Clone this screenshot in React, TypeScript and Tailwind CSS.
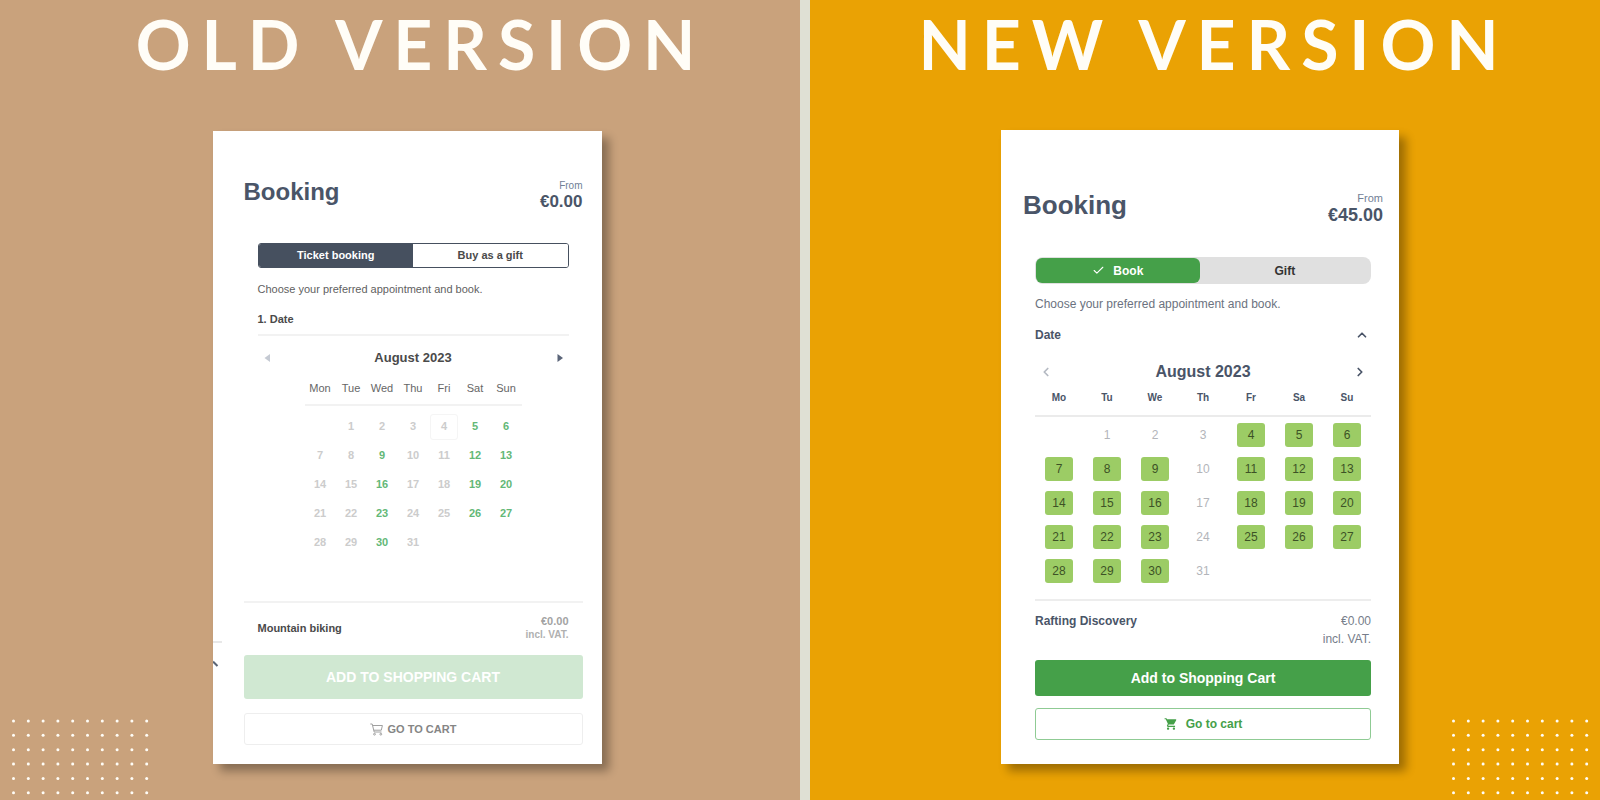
import { useState } from "react";
import { Check, ChevronLeft, ChevronRight, ChevronUp } from "lucide-react";
import { MdShoppingCart } from "react-icons/md";

const weeks: (number | null)[][] = [
  [null, 1, 2, 3, 4, 5, 6],
  [7, 8, 9, 10, 11, 12, 13],
  [14, 15, 16, 17, 18, 19, 20],
  [21, 22, 23, 24, 25, 26, 27],
  [28, 29, 30, 31, null, null, null],
];

const oldDays = ["Mon", "Tue", "Wed", "Thu", "Fri", "Sat", "Sun"];
const newDays = ["Mo", "Tu", "We", "Th", "Fr", "Sa", "Su"];

const oldAvailable = [5, 6, 9, 12, 13, 16, 19, 20, 23, 26, 27, 30];
const newUnavailable = [1, 2, 3, 10, 17, 24, 31];

const Title = ({ children }: { children: string }) => (
  <h1 className="pl-7 text-center font-['Lato',sans-serif] text-[68px] leading-[88px] font-bold tracking-[0.16em] whitespace-nowrap text-[#fffdf7]">
    {children}
  </h1>
);

const Dots = ({ className }: { className: string }) => (
  <svg width="160" height="84" viewBox="0 0 160 84" className={className} aria-hidden="true">
    {[0, 1, 2, 3, 4, 5].map((row) =>
      [0, 1, 2, 3, 4, 5, 6, 7, 8, 9].map((col) => (
        <circle
          key={`${row}-${col}`}
          cx={13.5 + col * 14.8}
          cy={5 + row * 14.35}
          r="1.5"
          fill="#fffdf7"
        />
      ))
    )}
  </svg>
);

const CartOutline = () => (
  <svg width="13" height="13" viewBox="0 0 13 13" fill="none" stroke="#a0a0a0" aria-hidden="true">
    <path d="M0.3 1h1.9l2 8h7.3M2.6 2.5h9.8l-1.1 4.7H3.8" />
    <circle cx="4.5" cy="11.2" r="0.9" />
    <circle cx="10.8" cy="11.2" r="0.9" />
  </svg>
);

const OldBooking = () => {
  const [tab, setTab] = useState("ticket");

  const tabClass = (name: string) =>
    tab === name ? "flex-1 bg-[#46505f] text-white" : "flex-1 bg-white text-[#4a4a4a]";

  return (
    <section className="relative mx-auto mt-[43px] w-[389px] bg-white pt-[47px] pr-[19px] pb-[19px] pl-[31px] shadow-[7px_7px_9px_rgba(0,0,0,0.33)]">
      {/* edge of the page behind the widget */}
      <svg width="10" height="30" viewBox="0 0 10 30" className="absolute bottom-[95px] left-0" fill="none" aria-hidden="true">
        <path d="M0 3h9" stroke="#e8e8e8" strokeWidth="2" />
        <path d="M0 22.5l4.5 4.5" stroke="#5b6575" strokeWidth="2" />
      </svg>

      <header className="flex items-start justify-between text-[#4a5568]">
        <h2 className="text-[24px] leading-7 font-bold">Booking</h2>
        <div className="text-right">
          <div className="text-[10px] leading-4 text-[#718096]">From</div>
          <div className="text-[17px] leading-4 font-bold">€0.00</div>
        </div>
      </header>

      <div className="mx-[14px] mt-[33px]">
        <div className="flex h-[25px] overflow-hidden rounded-[3px] border border-[#46505f] text-[11px] font-bold">
          <button type="button" onClick={() => setTab("ticket")} className={tabClass("ticket")}>
            Ticket booking
          </button>
          <button type="button" onClick={() => setTab("gift")} className={tabClass("gift")}>
            Buy as a gift
          </button>
        </div>
        <p className="mt-[13px] text-[11px] leading-4 text-[#5f5f5f]">
          Choose your preferred appointment and book.
        </p>
        <h3 className="mt-[14px] border-b-2 border-[#f2f2f2] pb-[7px] text-[11px] leading-4 font-bold text-[#4a4a4a]">
          1. Date
        </h3>

        <div className="mt-[14px] flex h-4 items-center justify-between px-[6px]">
          <button type="button" aria-label="Previous month">
            <svg width="6" height="8" viewBox="0 0 6 8" aria-hidden="true">
              <path d="M6 0v8L0.5 4z" fill="#c5cad3" />
            </svg>
          </button>
          <span className="text-[13px] leading-4 font-bold text-[#4a4a4a]">August 2023</span>
          <button type="button" aria-label="Next month">
            <svg width="6" height="8" viewBox="0 0 6 8" aria-hidden="true">
              <path d="M0.5 0v8L6 4z" fill="#5b6579" />
            </svg>
          </button>
        </div>

        <table className="mx-auto mt-[7px] w-[217px] table-fixed border-collapse text-center text-[11px]">
          <thead>
            <tr className="border-b-2 border-[#f2f2f2]">
              {oldDays.map((day) => (
                <th key={day} scope="col" className="h-[32px] p-0 font-normal text-[#666666]">
                  {day}
                </th>
              ))}
            </tr>
          </thead>
          <tbody className="before:block before:h-[6px]">
            {weeks.map((week, i) => (
              <tr key={i}>
                {week.map((day, j) => (
                  <td key={j} className="h-[29px] p-0">
                    {day && (
                      <button
                        type="button"
                        disabled={!oldAvailable.includes(day)}
                        className={
                          oldAvailable.includes(day)
                            ? "font-bold text-[#63b877]"
                            : day === 4
                              ? "h-[26px] w-[28px] rounded-[3px] border border-[#f5f5f5] font-bold text-[#cccccc]"
                              : "font-bold text-[#cccccc]"
                        }
                      >
                        {day}
                      </button>
                    )}
                  </td>
                ))}
              </tr>
            ))}
          </tbody>
        </table>
      </div>

      <footer className="mt-[44px] border-t-2 border-[#f2f2f2]">
        <div className="flex items-center justify-between px-[14px] pt-[11px] pb-[13px]">
          <span className="text-[11px] font-bold text-[#4a4a4a]">Mountain biking</span>
          <div className="text-right leading-[14px] font-bold text-[#b0b0b0]">
            <div className="text-[11px] text-[#a3a3a3]">€0.00</div>
            <div className="text-[10px]">incl. VAT.</div>
          </div>
        </div>
        <button type="button" className="block h-11 w-full rounded-[3px] bg-[#d0e8d2] text-[14px] font-bold text-white">
          ADD TO SHOPPING CART
        </button>
        <button
          type="button"
          className="mt-[14px] flex h-8 w-full items-center justify-center gap-[5px] rounded-[3px] border border-[#eeeeee] text-[11px] font-bold text-[#858585]"
        >
          <CartOutline />
          GO TO CART
        </button>
      </footer>
    </section>
  );
};

const NewBooking = () => {
  const [tab, setTab] = useState("book");

  const tabClass = (name: string) =>
    tab === name
      ? "flex w-[49%] items-center justify-center gap-2 rounded-md bg-[#45a049] text-white"
      : "flex flex-1 items-center justify-center gap-2 rounded-md text-[#333333]";

  return (
    <section className="mx-auto mt-[42px] w-[398px] bg-white pt-[61px] pr-4 pb-6 pl-[22px] shadow-[7px_7px_9px_rgba(0,0,0,0.33)]">
      <header className="flex items-start justify-between text-[#4a5568]">
        <h2 className="text-[26px] leading-7 font-bold">Booking</h2>
        <div className="text-right">
          <div className="text-[11px] leading-[15px] text-[#718096]">From</div>
          <div className="text-[18px] leading-[18px] font-bold">€45.00</div>
        </div>
      </header>

      <div className="mx-3 mt-[33px] text-[12px] text-[#4a5568]">
        <div className="flex h-[27px] rounded-lg bg-[#e0e0e0] p-px font-bold">
          <button type="button" onClick={() => setTab("book")} className={tabClass("book")}>
            {tab === "book" && <Check size={13} strokeWidth={2} />}
            Book
          </button>
          <button type="button" onClick={() => setTab("gift")} className={tabClass("gift")}>
            {tab === "gift" && <Check size={13} strokeWidth={2} />}
            Gift
          </button>
        </div>
        <p className="mt-3 leading-4 text-[#6b7280]">Choose your preferred appointment and book.</p>
        <div className="mt-[15px] flex items-center justify-between pr-[2px] leading-4">
          <h3 className="font-bold">Date</h3>
          <button type="button" aria-label="Collapse date">
            <ChevronUp size={14} strokeWidth={3} />
          </button>
        </div>

        <div className="mt-[19px] flex h-5 items-center justify-between px-1">
          <button type="button" aria-label="Previous month" className="text-[#b4b9c2]">
            <ChevronLeft size={14} strokeWidth={3} />
          </button>
          <span className="text-[16px] leading-5 font-bold">August 2023</span>
          <button type="button" aria-label="Next month">
            <ChevronRight size={14} strokeWidth={3} />
          </button>
        </div>

        <table className="w-full table-fixed border-collapse text-center">
          <thead>
            <tr className="border-b-2 border-[#ebebeb]">
              {newDays.map((day) => (
                <th key={day} scope="col" className="h-[34px] p-0 pb-[3px] text-[10px] font-bold">
                  {day}
                </th>
              ))}
            </tr>
          </thead>
          <tbody className="before:block before:h-px">
            {weeks.map((week, i) => (
              <tr key={i}>
                {week.map((day, j) => (
                  <td key={j} className="h-[34px] p-0">
                    {day && (
                      <button
                        type="button"
                        disabled={newUnavailable.includes(day)}
                        className={
                          newUnavailable.includes(day)
                            ? "h-6 w-7 text-[#b3b5ba]"
                            : "h-6 w-7 rounded-[3px] bg-[#9ccc65] text-[#3d5226]"
                        }
                      >
                        {day}
                      </button>
                    )}
                  </td>
                ))}
              </tr>
            ))}
          </tbody>
        </table>

        <footer className="mt-[11px] border-t-2 border-[#ededed] pt-[11px]">
          <div className="flex items-start justify-between leading-[18px]">
            <span className="font-bold">Rafting Discovery</span>
            <div className="text-right text-[#767d8a]">
              <div>€0.00</div>
              <div>incl. VAT.</div>
            </div>
          </div>
          <button type="button" className="mt-3 block h-9 w-full rounded-[3px] bg-[#45a049] text-[14px] font-bold text-white">
            Add to Shopping Cart
          </button>
          <button
            type="button"
            className="mt-3 flex h-8 w-full items-center justify-center gap-2 rounded-[3px] border border-[#8fcb94] font-bold text-[#45a049]"
          >
            <MdShoppingCart size={14} />
            Go to cart
          </button>
        </footer>
      </div>
    </section>
  );
};

export default function App() {
  return (
    <main className="flex min-h-screen font-['Liberation_Sans',Arial,sans-serif]">
      <div className="relative w-1/2 bg-[#c9a27c] pb-9 pl-[14px]">
        <Title>OLD VERSION</Title>
        <OldBooking />
        <Dots className="absolute bottom-0 left-0" />
      </div>
      <div className="w-[10px] bg-[#dfe0d4]" />
      <div className="relative flex-1 bg-[#eaa204] pr-[10px] pb-9">
        <Title>NEW VERSION</Title>
        <NewBooking />
        <Dots className="absolute right-0 bottom-0" />
      </div>
    </main>
  );
}
